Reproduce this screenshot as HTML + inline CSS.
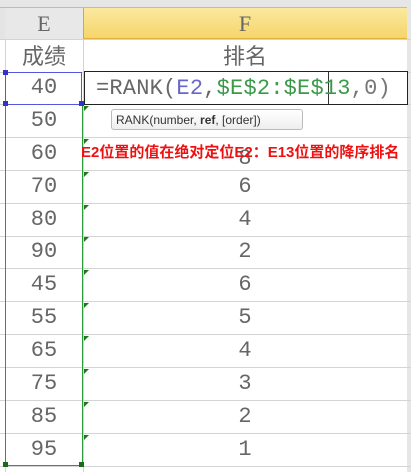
<!DOCTYPE html>
<html style="overflow:hidden;width:411px;height:472px"><head><meta charset="utf-8"><style>
body{margin:0;width:411px;height:472px;background:#fff;position:relative;overflow:hidden;font-family:"Liberation Mono","Noto Sans CJK SC",monospace;color:#666}
.a{position:absolute}
.hl{position:absolute;left:0;width:411px;height:1px;background:#d4d4d4}
.vl{position:absolute;width:1px;height:433px;background:#d4d4d4}
.c{position:absolute;text-align:center;font-size:22px;line-height:32px}
.e{left:5px;width:78px}
.f{left:83px;width:324px}
.tri{position:absolute;left:84px;width:0;height:0;border-top:5px solid #1a7a1a;border-right:5px solid transparent}
</style></head><body>
<div class="a" style="left:0;top:0;width:411px;height:7px;background:#e6e6e6;border-bottom:1px solid #bbb"></div>
<div class="a" style="left:0;top:8px;width:5px;height:31px;background:#e4e4e4"></div>
<div class="a" style="left:5px;top:8px;width:78px;height:31px;background:#e8e8e8;border-right:1px solid #aaa"></div>
<div class="a" style="left:84px;top:8px;width:323px;height:30px;background:linear-gradient(#fbe9a0,#f5d56a);border-bottom:1px solid #e0b040"></div>
<div class="a" style="left:407px;top:0;width:4px;height:472px;background:#e6e6e6"></div>
<div class="c e" style="top:8px;line-height:31px;font-family:'Liberation Serif',serif">E</div>
<div class="c f" style="top:8px;line-height:31px;font-family:'Liberation Serif',serif">F</div>
<div class="vl" style="left:83px;top:39px"></div>
<div class="vl" style="left:5px;top:39px"></div>
<div class="hl" style="top:39px"></div>
<div class="c e" style="top:39px;line-height:33px;font-family:'Noto Sans CJK SC',sans-serif;font-size:22px">成绩</div>
<div class="c f" style="top:39px;line-height:33px;font-family:'Noto Sans CJK SC',sans-serif;font-size:22px">排名</div>
<div class="hl" style="top:72px"></div>
<div class="hl" style="top:104px"></div><div class="hl" style="top:137px"></div><div class="hl" style="top:170px"></div><div class="hl" style="top:203px"></div><div class="hl" style="top:236px"></div><div class="hl" style="top:268px"></div><div class="hl" style="top:301px"></div><div class="hl" style="top:334px"></div><div class="hl" style="top:367px"></div><div class="hl" style="top:400px"></div><div class="hl" style="top:433px"></div><div class="hl" style="top:466px"></div>
<div class="c e" style="top:105px">50</div><div class="c e" style="top:138px">60</div><div class="c e" style="top:171px">70</div><div class="c e" style="top:204px">80</div><div class="c e" style="top:236px">90</div><div class="c e" style="top:269px">45</div><div class="c e" style="top:302px">55</div><div class="c e" style="top:335px">65</div><div class="c e" style="top:368px">75</div><div class="c e" style="top:401px">85</div><div class="c e" style="top:434px">95</div>
<div class="c f" style="top:143px">8</div><div class="c f" style="top:171px">6</div><div class="c f" style="top:204px">4</div><div class="c f" style="top:236px">2</div><div class="c f" style="top:269px">6</div><div class="c f" style="top:302px">5</div><div class="c f" style="top:335px">4</div><div class="c f" style="top:368px">3</div><div class="c f" style="top:401px">2</div><div class="c f" style="top:434px">1</div>
<div class="tri" style="top:106px"></div><div class="tri" style="top:139px"></div><div class="tri" style="top:172px"></div><div class="tri" style="top:205px"></div><div class="tri" style="top:237px"></div><div class="tri" style="top:270px"></div><div class="tri" style="top:303px"></div><div class="tri" style="top:336px"></div><div class="tri" style="top:369px"></div><div class="tri" style="top:402px"></div><div class="tri" style="top:435px"></div>
<div class="a" style="left:5px;top:104px;width:76px;height:360px;border:1px solid #2a9a3a"></div>
<div class="a" style="left:3px;top:462px;width:5px;height:5px;background:#1a6a1a"></div>
<div class="a" style="left:79px;top:462px;width:5px;height:5px;background:#1a6a1a"></div>
<div class="a" style="left:5px;top:72px;width:75px;height:31px;border:1px solid #5555dd;background:#fff"></div>
<div class="c e" style="top:72px">40</div>
<div class="a" style="left:3px;top:70px;width:5px;height:5px;background:#3333cc"></div>
<div class="a" style="left:3px;top:101px;width:5px;height:5px;background:#3333cc"></div>
<div class="a" style="left:79px;top:101px;width:5px;height:5px;background:#3333cc"></div>
<div class="a" style="left:84px;top:71px;width:322px;height:32px;border:1px solid #222;background:#fff"></div>
<div class="a" style="left:328px;top:72px;width:1px;height:32px;background:#333"></div>
<div class="a" style="left:96px;top:72px;line-height:33px;font-size:22px;letter-spacing:0.2px;white-space:nowrap">=RANK(<span style="color:#6666cc">E2</span>,<span style="color:#3a9a4a">$E$2:$E$13</span><span style="color:#777">,0)</span></div>
<div class="a" style="left:111px;top:109px;width:192px;height:21px;border:1px solid #bbb;border-radius:3px;background:linear-gradient(#fff,#eee);font-family:'Liberation Sans',sans-serif;font-size:12px;line-height:20px;color:#333;padding-left:4px;box-sizing:border-box">RANK(number, <b>ref</b>, [order])</div>
<div class="a" style="left:81px;top:143px;font-family:'Liberation Sans','Noto Sans CJK SC',sans-serif;font-size:15px;font-weight:bold;color:#ee1111;white-space:nowrap;line-height:20px">E2位置的值在绝对定位E2：E13位置的降序排名</div>
</body></html>
